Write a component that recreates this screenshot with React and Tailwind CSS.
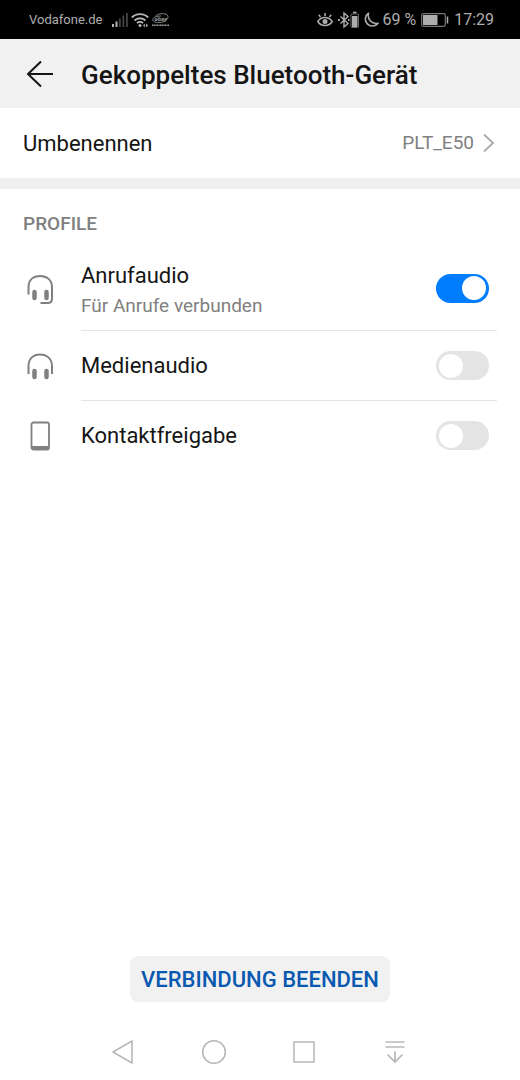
import { useState } from 'react';

const profiles = [
  { id: 'call', label: 'Anrufaudio', hint: 'Für Anrufe verbunden', icon: HeadsetIcon },
  { id: 'media', label: 'Medienaudio', icon: HeadphonesIcon },
  { id: 'contacts', label: 'Kontaktfreigabe', icon: PhoneIcon },
];

function HeadsetIcon() {
  return (
    <svg width="28" height="32" viewBox="0 0 28 32" fill="none" stroke="#808080" strokeWidth="2">
      <path d="M2.500 21.500V14C2.500 7 7 3 14 3S26 7 26 14v11.500c0 3-1.500 4.500-4.500 4.500H14.500" />
      <path d="M8.500 19v6M20.500 19v6" strokeWidth="4.500" strokeLinecap="round" />
    </svg>
  );
}

function HeadphonesIcon() {
  return (
    <svg width="28" height="28" viewBox="0 0 28 28" fill="none" stroke="#808080" strokeWidth="2">
      <path d="M2.500 22V14C2.500 7 7 2.500 14 2.500S26 7 26 14v8" />
      <path d="M8.500 19v6M20.500 19v6" strokeWidth="4.500" strokeLinecap="round" />
    </svg>
  );
}

function PhoneIcon() {
  return (
    <svg width="28" height="30" viewBox="0 0 28 30" fill="none">
      <rect x="5.500" y="1.500" width="17.500" height="27" rx="2" stroke="#808080" strokeWidth="1.800" />
      <path d="M5.500 25H23v2.500a1.500 1.500 0 0 1-1.500 1.500H7a1.500 1.500 0 0 1-1.500-1.500z" fill="#808080" />
    </svg>
  );
}

function SignalIcon() {
  return (
    <svg width="16" height="16" viewBox="0 0 16 16">
      <path d="M0 12h2v3H0zM3.500 9.500h2V15h-2z" fill="#b5b5b5" />
      <path d="M7 6.500h1.800V15H7zM10.500 3.500h1.800V15h-1.800zM14 1h1.800v14H14z" fill="#444" />
    </svg>
  );
}

function WifiIcon() {
  return (
    <svg width="18" height="16" viewBox="0 0 18 16" fill="none" stroke="#b5b5b5" strokeWidth="1.800">
      <path d="M.8 5.500a11.500 11.500 0 0 1 16.400 0M3.500 8.500a7.800 7.800 0 0 1 11 0M6 11.200a4.300 4.300 0 0 1 6 0" />
      <circle cx="9" cy="13.500" r="1.500" fill="#b5b5b5" stroke="none" />
      <path d="M13.800 11.500v4l-1.800-2zM15 11.500v4l2-2z" fill="#b5b5b5" stroke="none" />
    </svg>
  );
}

function AppBadgeIcon() {
  return (
    <svg width="17" height="14" viewBox="0 0 17 14" fill="none" stroke="#a0a0a0" strokeWidth="0.800">
      <path d="M3 3.500C6 0 15.500-.5 16 3.500c.3 3-3.500 6-9 6C2.500 9.500.5 8 .6 6.500.8 4.500 5 3 9 3" />
      <text x="2.500" y="7.800" fontSize="6" fontStyle="italic" fontWeight="700" fill="#a0a0a0" stroke="none">ebay</text>
      <path d="M0 12.300h17" strokeWidth="1.400" strokeDasharray="1.200 .4" />
    </svg>
  );
}

function EyeIcon() {
  return (
    <svg width="16" height="16" viewBox="0 0 16 16" fill="none" stroke="#adadad" strokeWidth="1.500">
      <path d="M.8 9.500C2.500 6.800 5 5.500 8 5.500s5.500 1.300 7.200 4c-1.700 2.700-4.200 4-7.200 4s-5.500-1.300-7.200-4z" />
      <circle cx="8" cy="9.500" r="2.500" fill="#adadad" stroke="none" />
      <path d="M8 4V1M3.500 5 1.800 2.700M12.500 5l1.700-2.300" />
    </svg>
  );
}

function BluetoothBatteryIcon() {
  return (
    <svg width="21" height="18" viewBox="0 0 21 18" fill="none" stroke="#adadad" strokeWidth="1.400">
      <path d="m2.500 5.500 7.500 7-4 3.500V2l4 3.500-7.500 7" />
      <path d="M0 9h1.800M10 9h1.500" strokeWidth="1.800" />
      <path d="M15 1.500h3.500" strokeWidth="1.600" />
      <rect x="13" y="3" width="7.500" height="13.500" rx="1" stroke="#6b6b6b" strokeWidth="1" />
      <path d="M14 5h5.500v11H14z" fill="#adadad" stroke="none" />
    </svg>
  );
}

function MoonIcon() {
  return (
    <svg width="16" height="16" viewBox="0 0 16 16" fill="none" stroke="#adadad" strokeWidth="1.600" strokeLinejoin="round">
      <path d="M5.500 1.200A7 7 0 1 0 15 11.200C9 12.500 4 7.500 5.500 1.200z" />
    </svg>
  );
}

function BatteryIcon() {
  return (
    <svg width="28" height="14" viewBox="0 0 28 14" fill="none">
      <rect x=".7" y=".7" width="23.600" height="12.600" rx="1.500" stroke="#777" strokeWidth="1.200" />
      <path d="M2 2h14.500v10H2z" fill="#adadad" />
      <path d="M26.500 3.500v7" stroke="#adadad" strokeWidth="1.500" />
    </svg>
  );
}

function StatusBar() {
  return (
    <div className="flex h-[39px] items-center justify-between bg-black pr-[26px] pl-[29px] text-[#adadad]">
      <div className="flex items-center">
        <span className="mr-[10px] text-[13px]">Vodafone.de</span>
        <SignalIcon />
        <span className="ml-[3px] flex items-center gap-[3px]">
          <WifiIcon />
          <AppBadgeIcon />
        </span>
      </div>
      <div className="flex items-center text-[16px]">
        <EyeIcon />
        <span className="ml-[5px]"><BluetoothBatteryIcon /></span>
        <span className="ml-1"><MoonIcon /></span>
        <span className="ml-[3px]">69 %</span>
        <span className="mx-[5px]"><BatteryIcon /></span>
        <time>17:29</time>
      </div>
    </div>
  );
}

function ProfileRow({ profile, checked, onToggle }) {
  const Icon = profile.icon;

  return (
    <li className="flex items-center pr-[23px] pl-[26px] [&:last-child>div]:border-transparent">
      <span className="mr-[27px] shrink-0"><Icon /></span>
      <div className={`flex flex-1 items-center justify-between border-b border-[#e5e5e5] pr-2 ${profile.hint ? 'h-[85px]' : 'h-[70px]'}`}>
        <label htmlFor={profile.id} className={`text-[22px] leading-[30px] text-[#151515] ${profile.hint ? 'pt-[6px]' : ''}`}>
          {profile.label}
          {profile.hint && <span className="block text-[19px] text-[#808080]">{profile.hint}</span>}
        </label>
        <input
          id={profile.id}
          type="checkbox"
          role="switch"
          checked={checked}
          onChange={onToggle}
          className="flex h-[29px] w-[53px] shrink-0 appearance-none items-center rounded-full bg-[#e4e4e4] px-[3px] before:size-6 before:rounded-full before:bg-white checked:justify-end checked:bg-[#007dff]"
        />
      </div>
    </li>
  );
}

function NavBar() {
  return (
    <nav className="grid h-[56px] grid-cols-4 place-items-center pr-[80px] pl-[78px] text-[#b8b8b8]">
      <button aria-label="Zurück">
        <svg width="24" height="26" viewBox="0 0 24 26" fill="none" stroke="currentColor" strokeWidth="1.600" strokeLinejoin="round">
          <path d="M21 2v22L2 13z" />
        </svg>
      </button>
      <button aria-label="Startseite">
        <svg width="26" height="26" viewBox="0 0 26 26" fill="none" stroke="currentColor" strokeWidth="1.600">
          <circle cx="13" cy="13" r="11.300" />
        </svg>
      </button>
      <button aria-label="Letzte Apps">
        <svg width="24" height="24" viewBox="0 0 24 24" fill="none" stroke="currentColor" strokeWidth="1.600" strokeLinejoin="round">
          <rect x="2" y="2" width="20" height="20" />
        </svg>
      </button>
      <button aria-label="Benachrichtigungen">
        <svg width="22" height="24" viewBox="0 0 22 24" fill="none" stroke="currentColor" strokeWidth="1.700">
          <path d="M1.500 2h19M1.500 7h19M11 11.500V22M3.500 14.500 11 22l7.500-7.500" />
        </svg>
      </button>
    </nav>
  );
}

export default function App() {
  const [enabled, setEnabled] = useState({ call: true, media: false, contacts: false });

  const toggle = (id) => setEnabled((prev) => ({ ...prev, [id]: !prev[id] }));

  return (
    <div className="flex min-h-screen flex-col bg-white font-[Roboto,sans-serif]">
      <StatusBar />
      <header className="flex h-[69px] items-center bg-[#f1f1f1] pl-[26px] text-[#151515]">
        <button aria-label="Zurück" className="mr-[27px]">
          <svg width="28" height="28" viewBox="0 0 28 28" fill="none" stroke="currentColor" strokeWidth="2">
            <path d="M27 14H2M15 1.500 2 14l13 12.500" />
          </svg>
        </button>
        <h1 className="pt-1 text-[26px] font-medium">Gekoppeltes Bluetooth-Gerät</h1>
      </header>

      <main className="flex flex-1 flex-col">
        <button className="flex h-[70px] items-center pr-[25px] pl-[23px] text-left">
          <span className="flex-1 text-[22px] text-[#151515]">Umbenennen</span>
          <span className="mr-2 text-[19px] text-[#808080]">PLT_E50</span>
          <svg width="13" height="20" viewBox="0 0 13 20" fill="none" stroke="#aaa" strokeWidth="1.800">
            <path d="m2 1.500 9 8.500-9 8.500" />
          </svg>
        </button>

        <section className="border-t-[11px] border-[#f0f0f0]">
          <h2 className="px-[23px] pt-5 pb-2 text-[19px] leading-[29px] font-medium text-[#808080]">PROFILE</h2>
          <ul>
            {profiles.map((profile) => (
              <ProfileRow
                key={profile.id}
                profile={profile}
                checked={enabled[profile.id]}
                onToggle={() => toggle(profile.id)}
              />
            ))}
          </ul>
        </section>

        <button className="mx-auto mt-auto mb-[22px] h-[46px] rounded-lg bg-[#f1f1f1] px-[11px] text-[22px] font-medium text-[#0a59b0]">
          VERBINDUNG BEENDEN
        </button>
      </main>

      <NavBar />
    </div>
  );
}
